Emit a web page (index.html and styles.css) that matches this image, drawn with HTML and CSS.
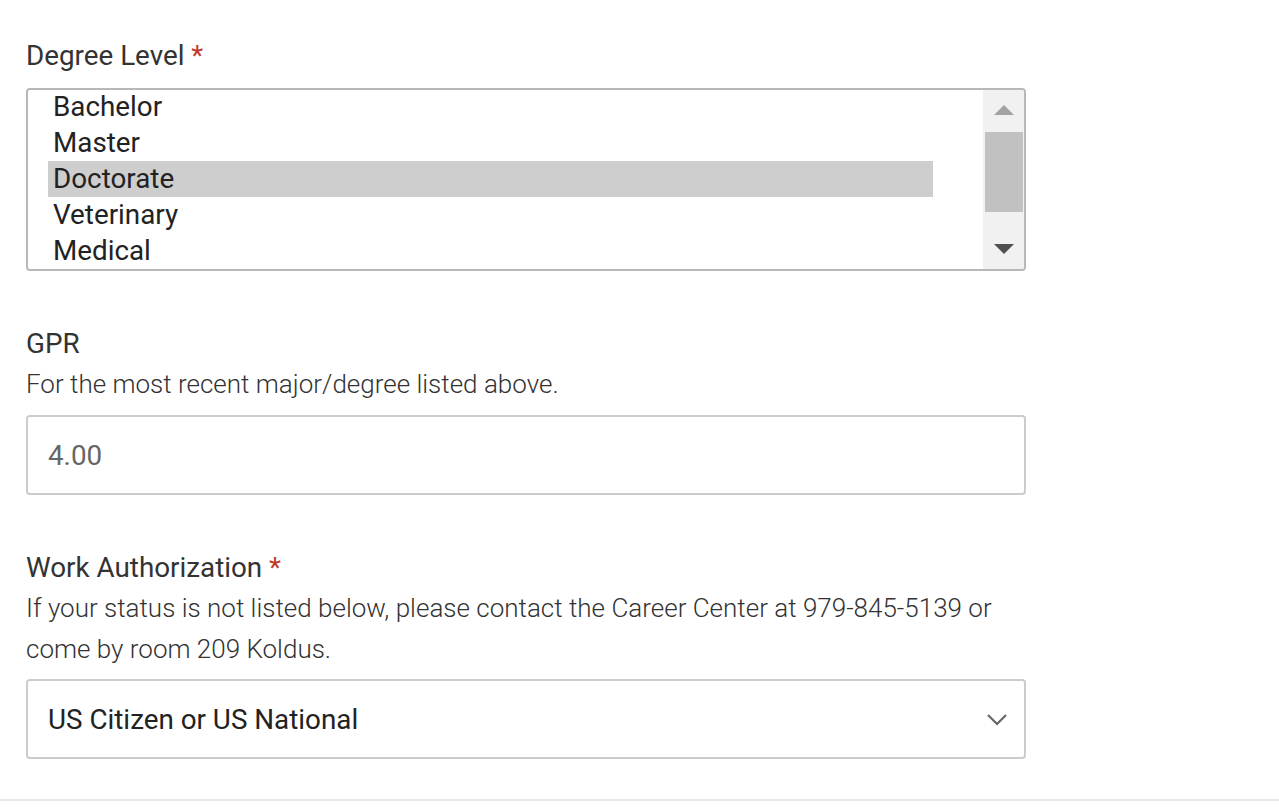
FILE: index.html
```html
<!DOCTYPE html>
<html>
<head>
<meta charset="utf-8">
<link rel="stylesheet" href="styles.css">
</head>
<body>
<div class="page">
  <form class="form">
    <div class="field field-first">
      <div class="label">Degree Level <span class="req">*</span></div>
      <div class="listbox">
        <div class="options">
          <div class="option">Bachelor</div>
          <div class="option">Master</div>
          <div class="option selected">Doctorate</div>
          <div class="option">Veterinary</div>
          <div class="option">Medical</div>
        </div>
        <div class="scrollbar">
          <div class="sb-btn"><span class="tri-up"></span></div>
          <div class="sb-track"><div class="sb-thumb"></div></div>
          <div class="sb-btn"><span class="tri-down"></span></div>
        </div>
      </div>
    </div>

    <div class="field">
      <div class="label">GPR</div>
      <div class="help">For the most recent major/degree listed above.</div>
      <div class="input">4.00</div>
    </div>

    <div class="field">
      <div class="label">Work Authorization <span class="req">*</span></div>
      <div class="help help-tight">If your status is not listed below, please contact the Career Center at 979-845-5139 or come by room 209 Koldus.</div>
      <div class="select">
        <span class="select-value">US Citizen or US National</span>
        <svg class="chevron" width="22" height="13" viewBox="0 0 22 13"><path d="M2 2 L11 11 L20 2" fill="none" stroke="#666" stroke-width="2.2"/></svg>
      </div>
    </div>
  </form>
  <div class="rule"></div>
</div>
</body>
</html>
```

FILE: styles.css
```css
html, body {
  margin: 0;
  padding: 0;
  background: #fff;
}
body {
  font-family: Roboto, "Liberation Sans", Arial, sans-serif;
  color: #333;
}
.page {
  width: 1279px;
}
.form {
  padding: 38px 0 0 26px;
  width: 1000px;
  display: flex;
  flex-direction: column;
  gap: 55px;
}
.field {
  display: flex;
  flex-direction: column;
}
.label {
  font-size: 27.8px;
  line-height: 36px;
  color: #333;
  margin-bottom: 2px;
}
.field-first .label {
  margin-bottom: 14px;
}
.req {
  color: #c0392b;
}
.help {
  font-size: 26px;
  font-weight: 300;
  line-height: 41px;
  color: #333;
  margin-bottom: 10px;
}
.help-tight {
  margin-bottom: 9px;
}
.listbox {
  box-sizing: border-box;
  width: 1000px;
  height: 183px;
  border: 2px solid #b8b8b8;
  border-radius: 4px;
  display: flex;
  overflow: hidden;
}
.options {
  flex: 1;
  padding: 0 50px 0 20px;
  margin-top: -1px;
  font-size: 27.8px;
  line-height: 36px;
  color: #222;
}
.option {
  padding-left: 5px;
  height: 36px;
}
.option.selected {
  background: #cecece;
}
.scrollbar {
  width: 41px;
  background: #f1f1f1;
  display: flex;
  flex-direction: column;
}
.sb-btn {
  height: 40px;
  display: flex;
  align-items: center;
  justify-content: center;
}
.tri-up {
  width: 0;
  height: 0;
  border-left: 10px solid transparent;
  border-right: 10px solid transparent;
  border-bottom: 10px solid #a3a3a3;
}
.tri-down {
  width: 0;
  height: 0;
  border-left: 10px solid transparent;
  border-right: 10px solid transparent;
  border-top: 10px solid #505050;
}
.sb-track {
  flex: 1;
  padding: 2px 1px 0 2px;
}
.sb-thumb {
  height: 80px;
  background: #c1c1c1;
}
.input, .select {
  box-sizing: border-box;
  width: 1000px;
  height: 80px;
  border: 2px solid #cccccc;
  border-radius: 4px;
  padding: 0 20px;
  display: flex;
  align-items: center;
  font-size: 27.8px;
}
.input {
  color: #666;
}
.select {
  color: #222;
  justify-content: space-between;
}
.chevron {
  margin-right: -4px;
}
.rule {
  margin-top: 40px;
  height: 2px;
  background: #e8e8e8;
  width: 1279px;
}
```
